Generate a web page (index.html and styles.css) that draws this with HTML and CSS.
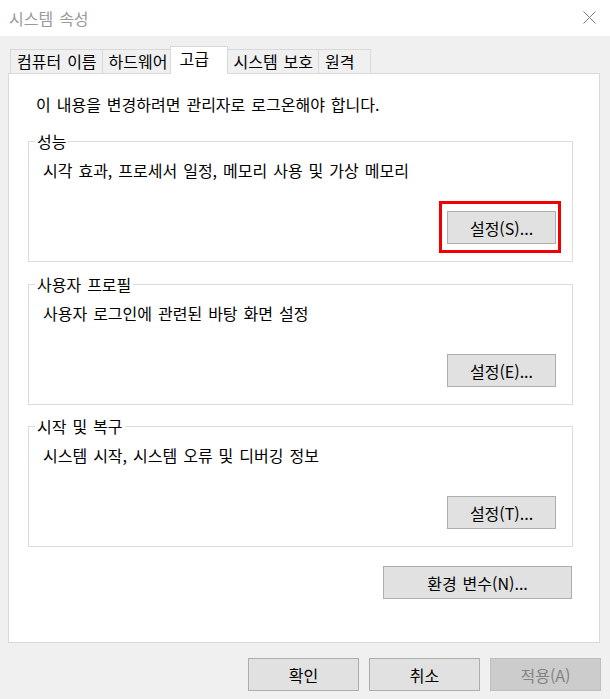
FILE: index.html
```html
<!DOCTYPE html>
<html lang="ko">
<head>
<meta charset="utf-8">
<title>시스템 속성</title>
<link rel="stylesheet" href="styles.css">
</head>
<body>
<div class="window">
  <header class="titlebar">
    <span class="title">시스템 속성</span>
    <svg class="close" width="13" height="13" viewBox="0 0 13 13" aria-hidden="true">
      <path d="M0.5 0.5 L12.5 12.5 M12.5 0.5 L0.5 12.5" stroke="#7a7a7a" stroke-width="1" fill="none"/>
    </svg>
  </header>
  <main class="content">
    <nav class="tabs">
      <div class="tab">컴퓨터 이름</div>
      <div class="tab">하드웨어</div>
      <div class="tab tab-active">고급</div>
      <div class="tab">시스템 보호</div>
      <div class="tab">원격</div>
    </nav>
    <section class="panel">
      <p class="intro">이 내용을 변경하려면 관리자로 로그온해야 합니다.</p>
      <fieldset class="group">
        <legend class="group-label">성능</legend>
        <p class="desc">시각 효과, 프로세서 일정, 메모리 사용 및 가상 메모리</p>
        <button class="btn btn-settings is-highlighted">설정(S)...</button>
      </fieldset>
      <fieldset class="group group-profile">
        <legend class="group-label">사용자 프로필</legend>
        <p class="desc">사용자 로그인에 관련된 바탕 화면 설정</p>
        <button class="btn btn-settings">설정(E)...</button>
      </fieldset>
      <fieldset class="group group-startup">
        <legend class="group-label">시작 및 복구</legend>
        <p class="desc">시스템 시작, 시스템 오류 및 디버깅 정보</p>
        <button class="btn btn-settings">설정(T)...</button>
      </fieldset>
      <button class="btn btn-env">환경 변수(N)...</button>
    </section>
    <footer class="actions">
      <button class="btn btn-action">확인</button>
      <button class="btn btn-action">취소</button>
      <button class="btn btn-action" disabled>적용(A)</button>
    </footer>
  </main>
</div>
</body>
</html>
```

FILE: styles.css
```css
* {
  box-sizing: border-box;
}

html, body {
  margin: 0;
  padding: 0;
}

body {
  font-family: "Noto Sans CJK KR", "Noto Sans", sans-serif;
  font-size: 16px;
  word-spacing: 1.5px;
  color: #000;
  background: #f0f0f0;
}

.window {
  width: 610px;
  height: 699px;
  background: #f0f0f0;
  overflow: hidden;
}

.titlebar {
  height: 36px;
  background: #fff;
  display: flex;
  align-items: center;
  justify-content: space-between;
  padding: 0 14px 0 9px;
}

.title {
  color: #9a9a9a;
  line-height: 20px;
  margin-top: -1px;
}

.close {
  display: block;
  margin-top: -2px;
}

.content {
  padding: 10px 10px 0 8px;
}

.tabs {
  display: flex;
  align-items: flex-end;
  padding-left: 2px;
  height: 27px;
}

.tab {
  height: 24px;
  line-height: 22px;
  min-width: 53px;
  padding: 0 5px 0 6px;
  border: 1px solid #d9d9d9;
  border-bottom: none;
  margin-right: -1px;
  background: #f0f0f0;
  white-space: nowrap;
}

.tab-active {
  position: relative;
  z-index: 1;
  height: 28px;
  min-width: 58px;
  margin: 0 -2px -1px -2px;
  padding-left: 8px;
  background: #fff;
}

.panel {
  display: flex;
  flex-direction: column;
  background: #fff;
  border: 1px solid #d9d9d9;
  padding: 20px 26px 43px 19px;
}

.intro {
  margin: 0 0 17px 8px;
  line-height: 20px;
}

.group {
  display: flex;
  flex-direction: column;
  margin: 0;
  min-width: 0;
  border: 1px solid #dcdcdc;
  padding: 0 16px 17px 6px;
}

.group-profile {
  margin-top: 12px;
}

.group-startup {
  margin-top: 11px;
}

.group-label {
  padding: 0 2px;
  line-height: 20px;
}

.desc {
  margin: 9px 0 0 8px;
  line-height: 20px;
}

.btn {
  font-family: inherit;
  font-size: 16px;
  word-spacing: 1.5px;
  color: #000;
  background: #e1e1e1;
  border: 1px solid #adadad;
  border-radius: 0;
  height: 33px;
  padding: 0;
  line-height: 20px;
}

.btn-settings {
  align-self: flex-end;
  width: 109px;
  margin-top: 31px;
}

.is-highlighted {
  position: relative;
}

.is-highlighted::after {
  content: "";
  position: absolute;
  left: -9px;
  top: -11px;
  right: -6px;
  bottom: -10px;
  border: 3px solid #f00000;
  pointer-events: none;
}

.btn-env {
  align-self: flex-end;
  width: 189px;
  margin-top: 19px;
  margin-right: 1px;
}

.actions {
  display: flex;
  justify-content: flex-end;
  gap: 10px;
  padding: 15px 0 0 0;
  margin-right: -1px;
}

.btn-action {
  width: 111px;
}

.btn-action:disabled {
  background: #cccccc;
  border-color: #bfbfbf;
  color: #838383;
}
```
